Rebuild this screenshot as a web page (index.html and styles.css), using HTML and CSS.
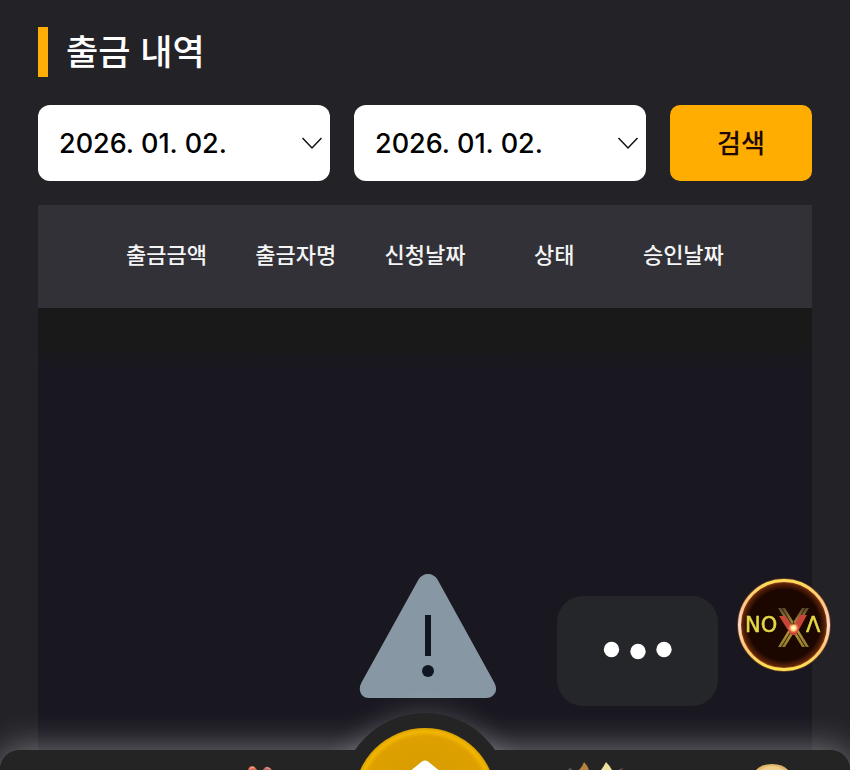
FILE: index.html
```html
<!DOCTYPE html>
<html lang="ko">
<head>
<meta charset="utf-8">
<meta name="viewport" content="width=device-width, initial-scale=1">
<title>출금 내역</title>
<link rel="stylesheet" href="styles.css">
</head>
<body>
<main class="page">
  <h1 class="title">출금 내역</h1>
  <form class="filter">
    <label class="date">
      <input class="date-input" type="text" name="from" value="2026. 01. 02." aria-label="시작일">
      <svg class="date-arrow" viewBox="0 0 22 14" aria-hidden="true"><path d="M1.500 2 11 12 20.500 2"/></svg>
    </label>
    <label class="date">
      <input class="date-input" type="text" name="to" value="2026. 01. 02." aria-label="종료일">
      <svg class="date-arrow" viewBox="0 0 22 14" aria-hidden="true"><path d="M1.500 2 11 12 20.500 2"/></svg>
    </label>
    <button class="search" type="button">검색</button>
  </form>
  <section class="records">
    <div class="records-head">
      <table class="records-table">
        <thead>
          <tr><th scope="col">출금금액</th><th scope="col">출금자명</th><th scope="col">신청날짜</th><th scope="col">상태</th><th scope="col">승인날짜</th></tr>
        </thead>
      </table>
    </div>
    <div class="empty">
      <svg class="warning" viewBox="0 0 144 126" aria-hidden="true">
        <path d="M65.500 6.500Q69 1 75 1T84.500 6.500L141.500 110Q145 117 141 121.500 138 125 133 125H16Q11 125 8.500 121.500 5 116 8.500 109.500Z" fill="#8797a3"/>
        <path d="M72 42h6v41h-6z" fill="#111722"/>
        <circle cx="75" cy="98" r="6" fill="#111722"/>
      </svg>
    </div>
  </section>
</main>

<button class="chat" type="button" aria-label="더보기">
  <svg viewBox="0 0 70 20" aria-hidden="true"><circle cx="8.500" cy="8.500" r="7.700"/><circle cx="35" cy="10.500" r="7.700"/><circle cx="61" cy="8.500" r="7.700"/></svg>
</button>

<a class="brand" href="#" aria-label="NOVA">
  <svg viewBox="0 0 100 100">
    <defs>
      <radialGradient id="disc"><stop offset="0" stop-color="#1c0800"/><stop offset=".8" stop-color="#1b0700"/><stop offset=".93" stop-color="#5a2208"/><stop offset="1" stop-color="#c06b1c"/></radialGradient>
      <linearGradient id="ring" x1="0" y1="0" x2="0" y2="1"><stop offset="0" stop-color="#ffdc59"/><stop offset=".28" stop-color="#ffc58a"/><stop offset=".5" stop-color="#ffdcd0"/><stop offset=".75" stop-color="#ffc673"/><stop offset="1" stop-color="#ffe04f"/></linearGradient>
      <linearGradient id="beam" x1="0" y1="0" x2="0" y2="1"><stop offset="0" stop-color="#5a4a2c"/><stop offset=".5" stop-color="#c09a3c"/><stop offset="1" stop-color="#8f7a29"/></linearGradient>
      <radialGradient id="spark"><stop offset="0" stop-color="#fff"/><stop offset=".45" stop-color="#ffdf80"/><stop offset="1" stop-color="#ff8040" stop-opacity="0"/></radialGradient>
    </defs>
    <circle cx="50" cy="50" r="46.500" fill="none" stroke="#b85a22" stroke-width="1" opacity=".5"/>
    <circle cx="50" cy="50" r="44.500" fill="url(#disc)" stroke="url(#ring)" stroke-width="3"/>
    <path d="M44 33h7l24 39h-7zM75 33h-7L44 72h7z" fill="url(#beam)"/>
    <path d="M47.500 33 71.500 72M71.500 33 47.500 72" stroke="#2b1a08" stroke-width="1"/>
    <text class="brand-text" x="11" y="57">NO</text>
    <text class="brand-text" x="72" y="57">Λ</text>
    <path d="M45 41h6l8 11 7-12h7L62 60h-5z" fill="#c94438"/>
    <circle cx="59.500" cy="53" r="5.500" fill="url(#spark)"/>
  </svg>
</a>

<nav class="tabs" aria-label="메뉴">
  <div class="tabs-glow"></div>
  <div class="home-ring"></div>
  <div class="tabs-bar"></div>
  <svg class="tab-icon tab-gift" viewBox="0 0 30 4" aria-hidden="true"><path d="M1 4Q2 0 5 0t5 4" fill="#d86c50"/><path d="M3 3q2-3 4-1" stroke="#f3b29b" fill="none"/><path d="M16 4q2-4 5-3t4 3" fill="#bc6c5c"/><path d="M19 2q2-1 4 1" stroke="#e5aaa0" fill="none"/></svg>
  <svg class="tab-icon tab-crown" viewBox="0 0 60 8" aria-hidden="true"><path d="M14 8q4-4 5-8 4 4 5 8z" fill="#b98140"/><path d="M36 8q3-4 5-8 4 4 6 8z" fill="#eee0a0"/><path d="M3 7l3-1 1 2H4zM55 7l3-1-1 2h-3z" fill="#66554a"/></svg>
  <svg class="tab-icon tab-coin" viewBox="0 0 38 6" aria-hidden="true"><path d="M3 6Q8 0 19 0t16 6z" fill="#e2b66a"/><path d="M7 6q5-4 12-4t12 4z" fill="#f0ce8c"/></svg>
  <a class="home" href="#" aria-label="홈">
    <svg viewBox="0 0 34 12" aria-hidden="true"><path d="M1 12 14 1.500Q17-.5 20 1.500L33 12z" fill="#fff"/></svg>
  </a>
</nav>
</body>
</html>
```
FILE: styles.css
```css
* { box-sizing: border-box; }

body {
  margin: 0;
  background: #232227;
  color: #fff;
  font-family: Inter, "Noto Sans CJK KR", sans-serif;
}

.page {
  display: flex;
  flex-direction: column;
  min-height: 100vh;
  padding: 27px 38px 0;
}

.title {
  margin: 0 0 28px;
  padding: 0 0 4px 18px;
  border-left: 10px solid #ffae08;
  font-family: "Noto Sans CJK KR", sans-serif;
  font-size: 35px;
  font-weight: 500;
  line-height: 46px;
}

.filter {
  display: grid;
  grid-template-columns: minmax(0, 1fr) minmax(0, 1fr) 142px;
  gap: 24px;
  margin-bottom: 24px;
}

.date {
  display: flex;
  align-items: center;
  height: 76px;
  padding: 0 7px 0 21px;
  border-radius: 12px;
  background: #fff;
}

.date-input {
  flex: 1;
  min-width: 0;
  padding: 0;
  border: 0;
  outline: 0;
  background: transparent;
  color: #000;
  font: 500 27px Inter, sans-serif;
}

.date-arrow {
  flex: none;
  width: 22px;
  height: 14px;
  fill: none;
  stroke: #111;
  stroke-width: 1.500;
}

.search {
  padding: 0 0 4px;
  border: 0;
  border-radius: 10px;
  background: #ffad00;
  color: #1d0806;
  font: 500 26px "Noto Sans CJK KR", sans-serif;
}

.records {
  display: flex;
  flex: 1;
  flex-direction: column;
}

.records-head {
  padding: 0 64px;
  background: #323137;
}

.records-table {
  width: 100%;
  table-layout: fixed;
  border-collapse: collapse;
}

.records-table th {
  height: 103px;
  padding: 0 0 8px;
  color: #f4f4f5;
  font-family: "Noto Sans CJK KR", sans-serif;
  font-size: 22px;
  font-weight: 500;
  white-space: nowrap;
}

.empty {
  flex: 1;
  padding-top: 265px;
  background: linear-gradient(#191919 0, #191919 36px, #191820 56px);
  text-align: center;
}

.warning { width: 144px; height: 126px; }

.chat {
  position: fixed;
  right: 132px;
  bottom: 64px;
  display: flex;
  align-items: center;
  justify-content: center;
  width: 161px;
  height: 110px;
  padding: 0;
  border: 0;
  border-radius: 26px;
  background: #252629;
}

.chat svg { width: 70px; height: 20px; fill: #fff; }

.brand {
  position: fixed;
  right: 16px;
  bottom: 95px;
  width: 100px;
  height: 100px;
}

.brand svg { display: block; }

.brand-text {
  fill: #e5d947;
  stroke: #e5d947;
  stroke-width: 0.5px;
  font: 21px "DejaVu Sans", sans-serif;
}

.tabs {
  position: fixed;
  right: 0;
  bottom: 0;
  left: 0;
  height: 110px;
  overflow: hidden;
  pointer-events: none;
}

.tabs-glow,
.tabs-bar {
  position: absolute;
  right: 0;
  bottom: -80px;
  left: 0;
  height: 100px;
  border-radius: 20px;
}

.tabs-glow { box-shadow: 0 0 36px rgba(255, 255, 255, .44); }

.tabs-bar { background: #242424; }

.home-ring,
.home {
  position: absolute;
  left: 50%;
  border-radius: 50%;
  transform: translateX(-50%);
}

.home-ring {
  bottom: -113px;
  width: 170px;
  height: 170px;
  background: #242424;
  box-shadow: 0 0 28px rgba(255, 255, 255, .22);
}

.home {
  bottom: -100px;
  display: flex;
  justify-content: center;
  width: 142px;
  height: 142px;
  padding-top: 32px;
  background: radial-gradient(closest-side, #d49a00 0, #dda000 88%, #f3b600 95%, #d9a000 100%);
  pointer-events: auto;
}

.home svg { width: 34px; height: 12px; }

.tab-icon { position: absolute; bottom: 0; }
.tab-gift { left: 29%; width: 30px; height: 4px; }
.tab-crown { left: 66%; width: 60px; height: 8px; margin-left: 4px; }
.tab-coin { right: 7%; width: 38px; height: 6px; }
```
